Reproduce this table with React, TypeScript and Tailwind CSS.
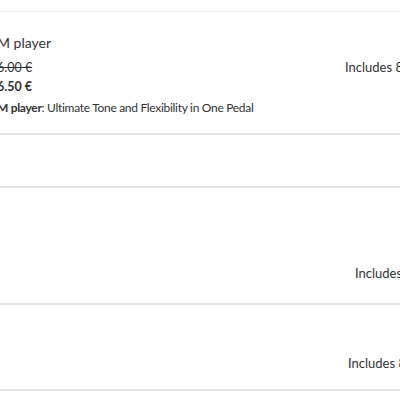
const font = { fontFamily: '"Source Sans Pro", Lato, "Liberation Sans", sans-serif' };

const Row = ({
  className,
  children,
}: {
  className: string;
  children?: React.ReactNode;
}) => <div className={`flex border-b-2 border-[#e6e6e6] ${className}`}>{children}</div>;

const App = () => {
  return (
    <div className="w-[400px] h-[400px] overflow-hidden bg-white text-[#333]" style={font}>
      <div className="h-[12px] border-b border-[#ececec]"></div>
      <Row className="h-[123px]">
        <div className="w-[348px] shrink-0 pt-[22px] -ml-[3px]">
          <div className="text-[14px] leading-[18px]">M player</div>
          <div className="mt-[8px] text-[12.5px] leading-[16px] line-through">6.00 €</div>
          <div className="mt-[3px] text-[12.5px] leading-[16px] font-bold">6.50 €</div>
          <div className="mt-[5px] text-[12px] leading-[16px] tracking-[-0.3px] whitespace-nowrap">
            <span className="font-bold">M player</span>: Ultimate Tone and Flexibility in One Pedal
          </div>
        </div>
        <div className="pt-[46px] text-[13px] whitespace-nowrap">Includes 8.00 € VAT</div>
      </Row>
      <Row className="h-[53px]" />
      <Row className="h-[117px]">
        <div className="w-[355px] shrink-0"></div>
        <div className="pt-[76px] text-[13px] whitespace-nowrap">Includes 5.50 € VAT</div>
      </Row>
      <Row className="h-[86px]">
        <div className="w-[348px] shrink-0"></div>
        <div className="pt-[49px] text-[13px] whitespace-nowrap">Includes 8.00 € VAT</div>
      </Row>
    </div>
  );
};

export default App;
